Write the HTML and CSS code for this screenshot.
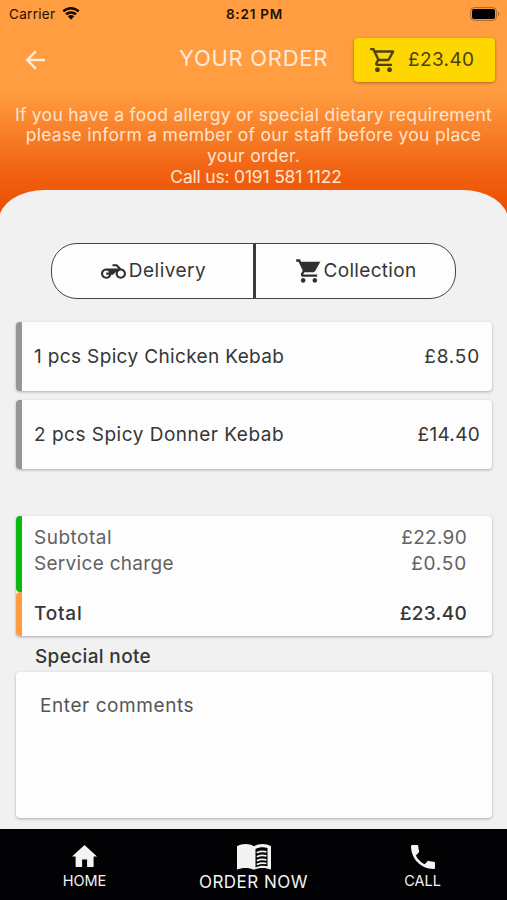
FILE: index.html
```html
<!DOCTYPE html>
<html lang="en">
<head>
<meta charset="utf-8">
<title>Your order</title>
<link rel="stylesheet" href="styles.css">
</head>
<body>
<div class="app">
  <div class="status">
    <div class="carrier"><span class="carrier-name">Carrier</span>
      <svg class="wifi" viewBox="0 0 18 14"><path d="M1.300 5.300a11 11 0 0 1 15.400 0M4 8.400a7.200 7.200 0 0 1 10 0" fill="none" stroke="#130b04" stroke-width="2.500"/><path d="M5.800 10.300a4.600 4.600 0 0 1 6.400 0L9 13.700z" fill="#130b04"/></svg>
    </div>
    <div class="clock">8:21 PM</div>
    <svg class="battery" viewBox="0 0 30 14"><rect x=".6" y=".6" width="25.800" height="12.800" rx="3.600" fill="none" stroke="#a66b30"/><rect x="2" y="2" width="23" height="10" rx="2" fill="#000"/><path d="M28 4.800c1.800.8 1.800 3.600 0 4.400z" fill="#a66b30"/></svg>
  </div>
  <header class="bar">
    <svg class="back" viewBox="0 0 20 20"><path d="M19.500 10H2M10.500 1.200L1.700 10l8.800 8.800" fill="none" stroke="#ffeadb" stroke-width="2.400"/></svg>
    <h1 class="title">YOUR ORDER</h1>
    <div class="basket">
      <svg class="basket-icon" viewBox="0 0 24 24"><path d="M15.550 13c.75 0 1.410-.41 1.750-1.030l3.580-6.490A.996.996 0 0 0 20.010 4H5.210l-.94-2H1v2h2l3.600 7.590-1.350 2.440C4.520 15.370 5.480 17 7 17h12v-2H7l1.100-2h7.450zM6.160 6h12.150l-2.760 5H8.530L6.160 6zM7 18c-1.100 0-1.990.9-1.990 2S5.900 22 7 22s2-.9 2-2-.9-2-2-2zm10 0c-1.100 0-1.990.9-1.990 2s.89 2 1.990 2 2-.9 2-2-.9-2-2-2z"/></svg>
      <span>£23.40</span>
    </div>
  </header>
  <p class="allergy"><span>If you have a food allergy or special dietary requirement</span><span>please inform a member of our staff before you place</span><span>your order.</span><span class="phone-line">Call us: 0191 581 1122</span></p>
  <main class="sheet">
    <div class="toggle">
      <div class="option"><svg class="moto" viewBox="0 0 24 24"><path d="M19.440 9.030L15.410 5H11v2h3.590l2 2H5c-2.800 0-5 2.200-5 5s2.200 5 5 5c2.460 0 4.450-1.690 4.900-4h1.650l2.770-2.770c-.21.54-.32 1.140-.32 1.770 0 2.800 2.200 5 5 5s5-2.200 5-5c0-2.650-1.970-4.770-4.560-4.970zM7.820 15C7.400 16.150 6.280 17 5 17c-1.630 0-3-1.370-3-3s1.370-3 3-3c1.280 0 2.400.85 2.820 2H5v2h2.820zM19 17c-1.660 0-3-1.340-3-3s1.340-3 3-3 3 1.340 3 3-1.340 3-3 3z"/></svg><span class="delivery">Delivery</span></div>
      <div class="option"><svg class="cart" viewBox="0 0 24 24"><path d="M7 18c-1.100 0-1.990.9-1.990 2S5.900 22 7 22s2-.9 2-2-.9-2-2-2zM1 2v2h2l3.600 7.590-1.350 2.450c-.16.28-.25.61-.25.96 0 1.100.9 2 2 2h12v-2H7.420c-.14 0-.25-.11-.25-.25l.03-.12.9-1.630h7.450c.75 0 1.410-.41 1.750-1.030L21.700 4H5.210l-.94-2H1zm16 16c-1.100 0-1.990.9-1.990 2s.89 2 1.990 2 2-.9 2-2-.9-2-2-2z"/></svg><span class="collection">Collection</span></div>
    </div>
    <div class="item"><span class="chicken">1 pcs Spicy Chicken Kebab</span><span class="wide">£8.50</span></div>
    <div class="item"><span class="donner">2 pcs Spicy Donner Kebab</span><span class="snug">£14.40</span></div>
    <section class="totals">
      <div class="charges">
        <div class="row"><span class="donner">Subtotal</span><span class="snug">£22.90</span></div>
        <div class="row"><span class="snug">Service charge</span><span class="wide">£0.50</span></div>
      </div>
      <div class="total row"><span class="wide">Total</span><span class="snug">£23.40</span></div>
    </section>
    <h2 class="note-title">Special note</h2>
    <div class="note">Enter comments</div>
  </main>
  <nav class="tabs">
    <div class="tab"><svg class="home" viewBox="0 0 25 22"><path d="M12.500 0L0 11.400h3.600V22h6.500v-7.500h5V22h6.500V11.400H25z"/></svg><span>HOME</span></div>
    <div class="tab main"><svg class="book" viewBox="0 0 34 26"><path d="M0 2.200C5.200-.7 12-.6 17 2.200c5-2.800 11.800-2.900 17 0V25.600c-5.200-2.100-12-2.100-17 .2-5-2.300-11.800-2.300-17-.2z"/><path class="page" d="M18.500 5c3.800-2 8.500-2.100 12-.9v18.200c-3.500-1-8.200-.8-12 1.200z"/><path class="lines" d="M19.800 8.700c3-1.400 6.600-1.600 9.600-.9M19.800 12.700c3-1.400 6.600-1.600 9.600-.9M19.800 16.700c3-1.400 6.600-1.600 9.600-.9M19.800 20.400c3-1.400 6.600-1.600 9.600-.9"/></svg><span>ORDER NOW</span></div>
    <div class="tab"><svg class="phone" viewBox="3 3 18 18"><path d="M6.620 10.790c1.440 2.830 3.760 5.140 6.590 6.590l2.200-2.200c.27-.27.67-.36 1.020-.24 1.120.37 2.330.57 3.570.57.55 0 1 .45 1 1V20c0 .55-.45 1-1 1-9.390 0-17-7.610-17-17 0-.55.45-1 1-1h3.500c.55 0 1 .45 1 1 0 1.250.2 2.450.57 3.570.11.35.03.74-.25 1.020l-2.200 2.200z"/></svg><span>CALL</span></div>
  </nav>
</div>
</body>
</html>
```
FILE: styles.css
```css
* { box-sizing: border-box; }
body { margin: 0; font-family: Inter, "Liberation Sans", sans-serif; color: #363636; font-size: 19px; }
svg { display: block; flex: none; }
.app { width: 507px; height: 900px; overflow: hidden; display: flex; flex-direction: column; background: linear-gradient(#ff9d40 0, #ff9d40 92px, #f06010 175px, #ed4d00 214px); }
.status { height: 28px; flex: none; display: grid; grid-template-columns: 1fr auto 1fr; align-items: center; padding: 0 7px 0 9px; font-size: 13.500px; line-height: 28px; color: #1c1006; }
.carrier { display: flex; align-items: center; gap: 7px; }
.carrier-name { letter-spacing: .3px; }
.wifi { width: 18px; height: 14px; margin-top: -2px; }
.clock { font-weight: 600; font-size: 13.500px; letter-spacing: .8px; }
.battery { width: 30px; height: 14px; justify-self: end; margin-top: -1px; }
.bar { height: 64px; flex: none; display: flex; align-items: center; padding: 0 12px 0 25px; }
.back { width: 21px; height: 20px; }
.title { margin: -4px 26px 0 auto; font-size: 22px; font-weight: 400; letter-spacing: .7px; color: #ffeadb; white-space: nowrap; }
.basket { width: 141px; height: 44px; display: flex; align-items: center; gap: 11px; padding-left: 15px; border-radius: 4px; background: #fed700; box-shadow: 0 1px 3px rgba(100, 50, 0, .5); color: #4b4217; fill: #4b4217; letter-spacing: .35px; line-height: 22px; }
.basket-icon { width: 29px; height: 30px; margin-right: -1px; }
.basket span { margin-top: -1px; }
.allergy { height: 98px; flex: none; margin: 0; padding-top: 12.500px; display: flex; flex-direction: column; align-items: center; font-size: 17.500px; line-height: 20.800px; letter-spacing: .28px; color: #ffe3cd; white-space: nowrap; }
.phone-line { letter-spacing: -.2px; padding-left: 5px; }
.sheet { flex: 1; background: #f1f1f1; margin: 0 -1px; border-radius: 46px 46px 0 0 / 30px 30px 0 0; padding: 53px 16px 0 16.500px; }
.toggle { width: 405px; height: 56px; margin: 0 auto 23px 35.500px; display: flex; border: 1.500px solid #444; border-radius: 26px; background: #fdfdfd; }
.option { flex: 1; display: flex; align-items: center; justify-content: center; fill: #303030; line-height: 22px; }
.option span { margin-top: -1px; }
.option:first-child { padding-left: 2px; flex: 0 0 201px; }
.option + .option { border-left: 3px solid #3b3b3b; }
.delivery { letter-spacing: .5px; }
.collection { letter-spacing: .3px; }
.moto { width: 25px; height: 27px; margin-right: 3px; }
.cart { width: 28px; height: 28px; margin-right: 1px; }
.item { height: 68.500px; margin: 0 0 9.500px; padding: 0 12px 0 12.500px; display: flex; align-items: center; justify-content: space-between; border-left: 6px solid #969696; border-radius: 4px; background: #fdfdfd; box-shadow: 0 1px 3px rgba(0, 0, 0, .3); }
.chicken { letter-spacing: .36px; }
.donner { letter-spacing: .5px; }
.wide { letter-spacing: .8px; }
.snug { letter-spacing: .3px; }
.totals { height: 119.500px; margin-top: 47.500px; border-radius: 4px; background: #fdfdfd; box-shadow: 0 1px 3px rgba(0, 0, 0, .3); }
.row { display: flex; justify-content: space-between; line-height: 26px; }
.charges { height: 76px; border-left: 6px solid #0ab80f; border-radius: 4px 0 0 4px; padding: 9px 25px 0 12.500px; color: #626262; }
.total { height: 43.500px; border-left: 6px solid #ff9d40; border-radius: 4px 0 0 4px; padding: 9px 25px 0 12.500px; font-weight: 500; }
.note-title { margin: 0 0 0 19.500px; font-size: 19px; font-weight: 500; line-height: 36px; height: 36px; padding-top: 3px; letter-spacing: .35px; }
.note { height: 146.500px; border-radius: 4px; background: #fdfdfd; box-shadow: 0 1px 3px rgba(0, 0, 0, .3); padding: 22px 24.500px; line-height: 24px; letter-spacing: .57px; color: #565656; }
.tabs { height: 71px; flex: none; background: #020103; display: grid; grid-template-columns: repeat(3, 1fr); color: #f3f3f3; fill: #f3f3f3; }
.tab { display: flex; flex-direction: column; align-items: center; padding-top: 16px; font-size: 14.500px; line-height: 18px; gap: 5px; white-space: nowrap; }
.tab.main { font-size: 17px; padding-top: 15px; gap: 2px; line-height: 20px; letter-spacing: .5px; }
.home { width: 25px; height: 22px; }
.phone { width: 24px; height: 24px; }
.tab:last-child { gap: 3px; }
.book { width: 34px; height: 26px; }
.page { fill: #020103; }
.lines { fill: none; stroke: #f3f3f3; stroke-width: 1.700; }
```
